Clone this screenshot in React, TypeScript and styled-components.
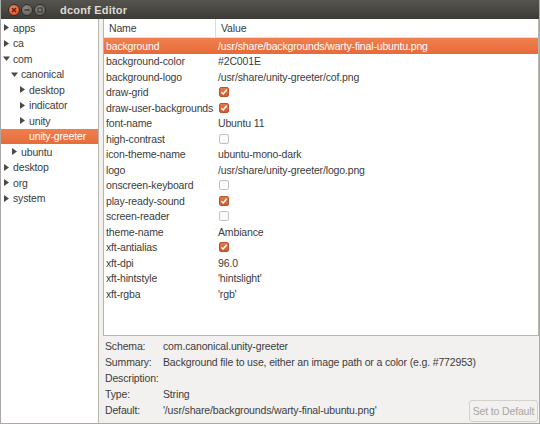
import React from "react";
import styled, { createGlobalStyle } from "styled-components";

const GlobalStyle = createGlobalStyle`
  html, body {
    margin: 0;
    padding: 0;
    background: #f2f1f0;
  }
  body {
    font-family: "Liberation Sans", "DejaVu Sans", sans-serif;
    font-size: 10.5px;
    letter-spacing: -0.15px;
    color: #3c3c3c;
  }
`;

const Window = styled.div`
  width: 540px;
  height: 424px;
  display: flex;
  flex-direction: column;
  background: #f2f1f0;
  box-sizing: border-box;
  border-left: 1px solid #aaa9a6;
  border-right: 1px solid #aaa9a6;
  border-bottom: 1px solid #aaa9a6;
  overflow: hidden;
`;

const TitleBar = styled.div`
  height: 19px;
  flex: none;
  display: flex;
  align-items: center;
  gap: 1px;
  padding-left: 7px;
  background: linear-gradient(#55544f, #3c3b37);
  color: #dfdbd2;
  font-family: "Liberation Sans", sans-serif;
  font-weight: bold;
  font-size: 11px;
`;

const WinButton = styled.div<{ $close?: boolean }>`
  width: 10px;
  height: 10px;
  border-radius: 50%;
  display: flex;
  align-items: center;
  justify-content: center;
  background: ${(p) =>
    p.$close
      ? "radial-gradient(circle at 40% 35%, #f8875a, #d9471f)"
      : "radial-gradient(circle at 40% 35%, #8c8a84, #5c5b56)"};
  border: 1px solid #2e2d29;
`;

const Title = styled.span`
  margin-left: 13px;
  letter-spacing: 0.2px;
`;

const Body = styled.div`
  flex: 1;
  display: flex;
  gap: 4px;
  min-height: 0;
`;

const TreePane = styled.div`
  width: 97px;
  flex: none;
  background: #ffffff;
  border-right: 1px solid #b6b4ae;
  padding-top: 1px;
`;

const TreeRow = styled.div<{ $depth: number; $selected?: boolean }>`
  height: 15.5px;
  display: flex;
  align-items: center;
  padding-left: ${(p) => 2 + p.$depth * 8}px;
  background: ${(p) => (p.$selected ? "linear-gradient(#f0804f, #e66b39)" : "transparent")};
  color: ${(p) => (p.$selected ? "#ffffff" : "#3c3c3c")};
  white-space: nowrap;
`;

const Expander = styled.span`
  width: 10px;
  flex: none;
  display: flex;
  align-items: center;
`;

const RightPane = styled.div`
  flex: 1;
  display: flex;
  flex-direction: column;
  min-width: 0;
`;

const TableBox = styled.div`
  flex: 1;
  background: #ffffff;
  border: 1px solid #b6b4ae;
  border-top: none;
  display: flex;
  flex-direction: column;
`;

const HeaderRow = styled.div`
  height: 18px;
  display: grid;
  grid-template-columns: 111px 1fr;
  align-items: center;
  border-bottom: 1px solid #e3e1dd;
  color: #3c3c3c;
`;

const HeaderCell = styled.div<{ $divider?: boolean }>`
  height: 100%;
  display: flex;
  align-items: center;
  padding-left: 5px;
  border-left: ${(p) => (p.$divider ? "1px solid #dcdad5" : "none")};
`;

const KeyRow = styled.div<{ $selected?: boolean }>`
  height: 15.5px;
  display: grid;
  grid-template-columns: 112px 1fr;
  align-items: center;
  background: ${(p) => (p.$selected ? "linear-gradient(#f0804f, #e66b39)" : "transparent")};
  color: ${(p) => (p.$selected ? "#ffffff" : "#3c3c3c")};
  white-space: nowrap;
`;

const Cell = styled.div`
  padding-left: 2px;
  overflow: hidden;
  display: flex;
  align-items: center;
`;

const Check = styled.span<{ $on?: boolean }>`
  width: 10px;
  height: 10px;
  box-sizing: border-box;
  border-radius: 2px;
  display: inline-flex;
  align-items: center;
  justify-content: center;
  margin-left: 1px;
  border: 1px solid ${(p) => (p.$on ? "#b9532a" : "#c3c1bc")};
  background: ${(p) => (p.$on ? "linear-gradient(#e9794a, #d05c2e)" : "#fbfbfa")};
`;

const InfoArea = styled.div`
  display: grid;
  grid-template-columns: minmax(0, 1fr) auto;
  align-items: end;
  padding: 2px 1px 1px 2px;
`;

const InfoGrid = styled.div`
  display: grid;
  grid-template-columns: 58px auto;
  grid-auto-rows: 16px;
  align-items: center;
  margin-bottom: 4px;
  color: #3c3c3c;
  white-space: nowrap;
`;

const DefaultButton = styled.button`
  font-family: inherit;
  font-size: 10.5px;
  letter-spacing: -0.15px;
  color: #a9a7a2;
  background: #f2f1f0;
  border: 1px solid #d3d1cc;
  border-radius: 3px;
  height: 22px;
  width: 69px;
  padding: 0;
  white-space: nowrap;
`;

const Triangle = ({ open }: { open: boolean }) =>
  open ? (
    <svg width="7" height="7" viewBox="0 0 7 7">
      <path d="M0 1.5 L7 1.5 L3.5 6 Z" fill="#4a4a48" />
    </svg>
  ) : (
    <svg width="7" height="7" viewBox="0 0 7 7">
      <path d="M1 0 L6 3.5 L1 7 Z" fill="#4a4a48" />
    </svg>
  );

const CheckMark = () => (
  <svg width="8" height="8" viewBox="0 0 8 8">
    <path d="M1.3 4.2 L3.2 6 L6.8 1.8" stroke="#ffffff" strokeWidth="1.5" fill="none" />
  </svg>
);

type TreeItem = { label: string; depth: number; expander?: "open" | "closed"; selected?: boolean };

const tree: TreeItem[] = [
  { label: "apps", depth: 0, expander: "closed" },
  { label: "ca", depth: 0, expander: "closed" },
  { label: "com", depth: 0, expander: "open" },
  { label: "canonical", depth: 1, expander: "open" },
  { label: "desktop", depth: 2, expander: "closed" },
  { label: "indicator", depth: 2, expander: "closed" },
  { label: "unity", depth: 2, expander: "closed" },
  { label: "unity-greeter", depth: 2, selected: true },
  { label: "ubuntu", depth: 1, expander: "closed" },
  { label: "desktop", depth: 0, expander: "closed" },
  { label: "org", depth: 0, expander: "closed" },
  { label: "system", depth: 0, expander: "closed" },
];

type Key = { name: string; value?: string; check?: boolean };

const keys: Key[] = [
  { name: "background", value: "/usr/share/backgrounds/warty-final-ubuntu.png" },
  { name: "background-color", value: "#2C001E" },
  { name: "background-logo", value: "/usr/share/unity-greeter/cof.png" },
  { name: "draw-grid", check: true },
  { name: "draw-user-backgrounds", check: true },
  { name: "font-name", value: "Ubuntu 11" },
  { name: "high-contrast", check: false },
  { name: "icon-theme-name", value: "ubuntu-mono-dark" },
  { name: "logo", value: "/usr/share/unity-greeter/logo.png" },
  { name: "onscreen-keyboard", check: false },
  { name: "play-ready-sound", check: true },
  { name: "screen-reader", check: false },
  { name: "theme-name", value: "Ambiance" },
  { name: "xft-antialias", check: true },
  { name: "xft-dpi", value: "96.0" },
  { name: "xft-hintstyle", value: "'hintslight'" },
  { name: "xft-rgba", value: "'rgb'" },
];

const info: [string, string][] = [
  ["Schema:", "com.canonical.unity-greeter"],
  ["Summary:", "Background file to use, either an image path or a color (e.g. #772953)"],
  ["Description:", ""],
  ["Type:", "String"],
  ["Default:", "'/usr/share/backgrounds/warty-final-ubuntu.png'"],
];

export default function App() {
  return (
    <>
      <GlobalStyle />
      <Window>
        <TitleBar>
          <WinButton $close>
            <svg width="6" height="6" viewBox="0 0 6 6">
              <path d="M1 1 L5 5 M5 1 L1 5" stroke="#5a1a08" strokeWidth="1.3" />
            </svg>
          </WinButton>
          <WinButton>
            <svg width="6" height="6" viewBox="0 0 6 6">
              <path d="M0.5 3 L5.5 3" stroke="#2e2d29" strokeWidth="1.3" />
            </svg>
          </WinButton>
          <WinButton>
            <svg width="6" height="6" viewBox="0 0 6 6">
              <rect x="1" y="1" width="4" height="4" stroke="#2e2d29" strokeWidth="1" fill="none" />
            </svg>
          </WinButton>
          <Title>dconf Editor</Title>
        </TitleBar>
        <Body>
          <TreePane>
            {tree.map((t, i) => (
              <TreeRow key={i} $depth={t.depth} $selected={t.selected}>
                <Expander>{t.expander && <Triangle open={t.expander === "open"} />}</Expander>
                {t.label}
              </TreeRow>
            ))}
          </TreePane>
          <RightPane>
            <TableBox>
              <HeaderRow>
                <HeaderCell>Name</HeaderCell>
                <HeaderCell $divider>Value</HeaderCell>
              </HeaderRow>
              {keys.map((k) => (
                <KeyRow key={k.name} $selected={k.name === "background"}>
                  <Cell>{k.name}</Cell>
                  <Cell>
                    {k.check === undefined ? (
                      k.value
                    ) : (
                      <Check $on={k.check}>{k.check && <CheckMark />}</Check>
                    )}
                  </Cell>
                </KeyRow>
              ))}
            </TableBox>
            <InfoArea>
              <InfoGrid>
                {info.map(([label, value]) => (
                  <React.Fragment key={label}>
                    <span>{label}</span>
                    <span>{value}</span>
                  </React.Fragment>
                ))}
              </InfoGrid>
              <DefaultButton disabled>Set to Default</DefaultButton>
            </InfoArea>
          </RightPane>
        </Body>
      </Window>
    </>
  );
}
